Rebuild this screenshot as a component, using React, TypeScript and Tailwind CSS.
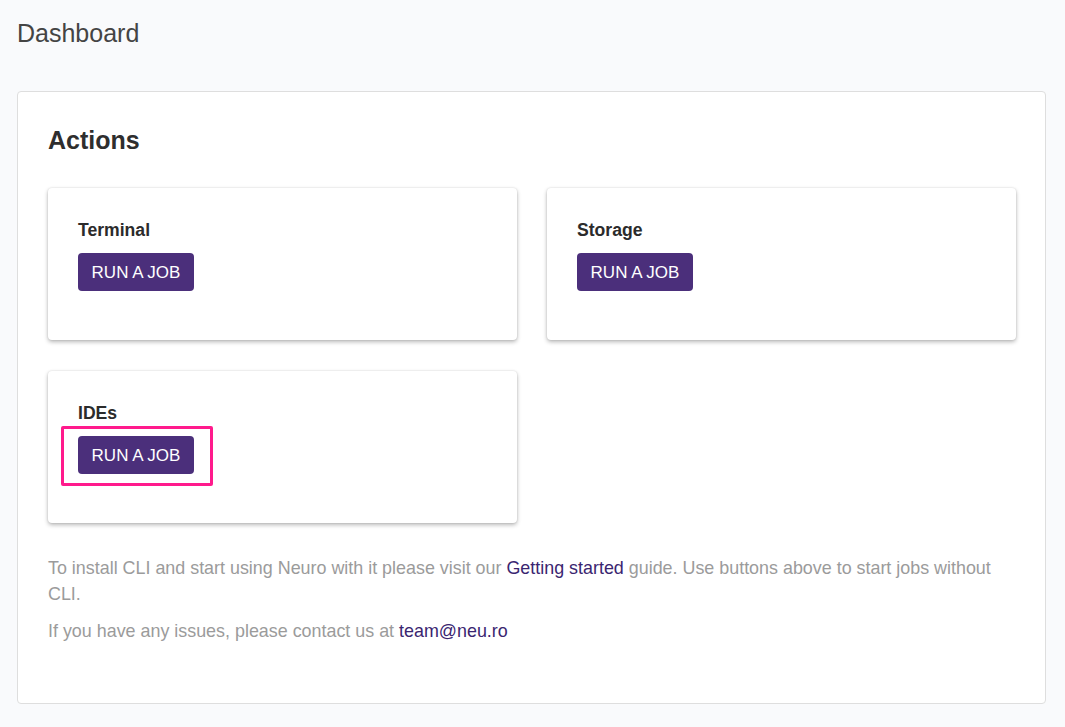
import React from "react";

const cards = [
  { title: "Terminal", focus: false },
  { title: "Storage", focus: false },
  { title: "IDEs", focus: true },
];

const App = () => {
  return (
    <div className="min-h-[727px] w-full bg-[#f9fafc] pl-[17px] pr-[19px] pt-[18px] pb-[24px] font-['Liberation_Sans',Arial,sans-serif]">
      <h1 className="text-[25px] leading-[30px] text-[#444]">Dashboard</h1>

      <div className="mt-[43px] rounded-[4px] border border-[#dedede] bg-white pl-[30px] pr-[29px] pt-[33px] pb-[59px]">
        <h2 className="text-[25px] font-bold leading-[30px] text-[#2e2e2e]">Actions</h2>

        <div className="mt-[33px] grid grid-cols-2 gap-x-[30px] gap-y-[31px]">
          {cards.map((card) => (
            <div
              key={card.title}
              className="h-[152px] rounded-[4px] bg-white pl-[30px] pt-[32px] shadow-[0_2px_4px_rgba(0,0,0,0.28),0_0_2px_rgba(0,0,0,0.12)]"
            >
              <div className="text-[17.6px] font-bold leading-[20px] text-[#2b2b2b]">{card.title}</div>
              <div className="relative mt-[13px] inline-block">
                {card.focus && (
                  <span className="pointer-events-none absolute -left-[17px] -right-[19px] -top-[10px] -bottom-[12px] rounded-[2px] border-[3px] border-[#ff1a8c]" />
                )}
                <button className="h-[38px] w-[116px] rounded-[4px] bg-[#4b2f7b] pt-[1px] text-[17px] uppercase text-white">
                  Run a job
                </button>
              </div>
            </div>
          ))}
        </div>

        <p className="mt-[32px] text-[17.9px] leading-[26px] text-[#9b9b9b]">
          To install CLI and start using Neuro with it please visit our{" "}
          <a href="#" className="text-[#3a2570]">
            Getting started
          </a>{" "}
          guide. Use buttons above to start jobs without CLI.
        </p>
        <p className="mt-[11px] text-[17.9px] leading-[26px] text-[#9b9b9b]">
          If you have any issues, please contact us at{" "}
          <a href="#" className="text-[#3a2570]">
            team@neu.ro
          </a>
        </p>
      </div>
    </div>
  );
};

export default App;
